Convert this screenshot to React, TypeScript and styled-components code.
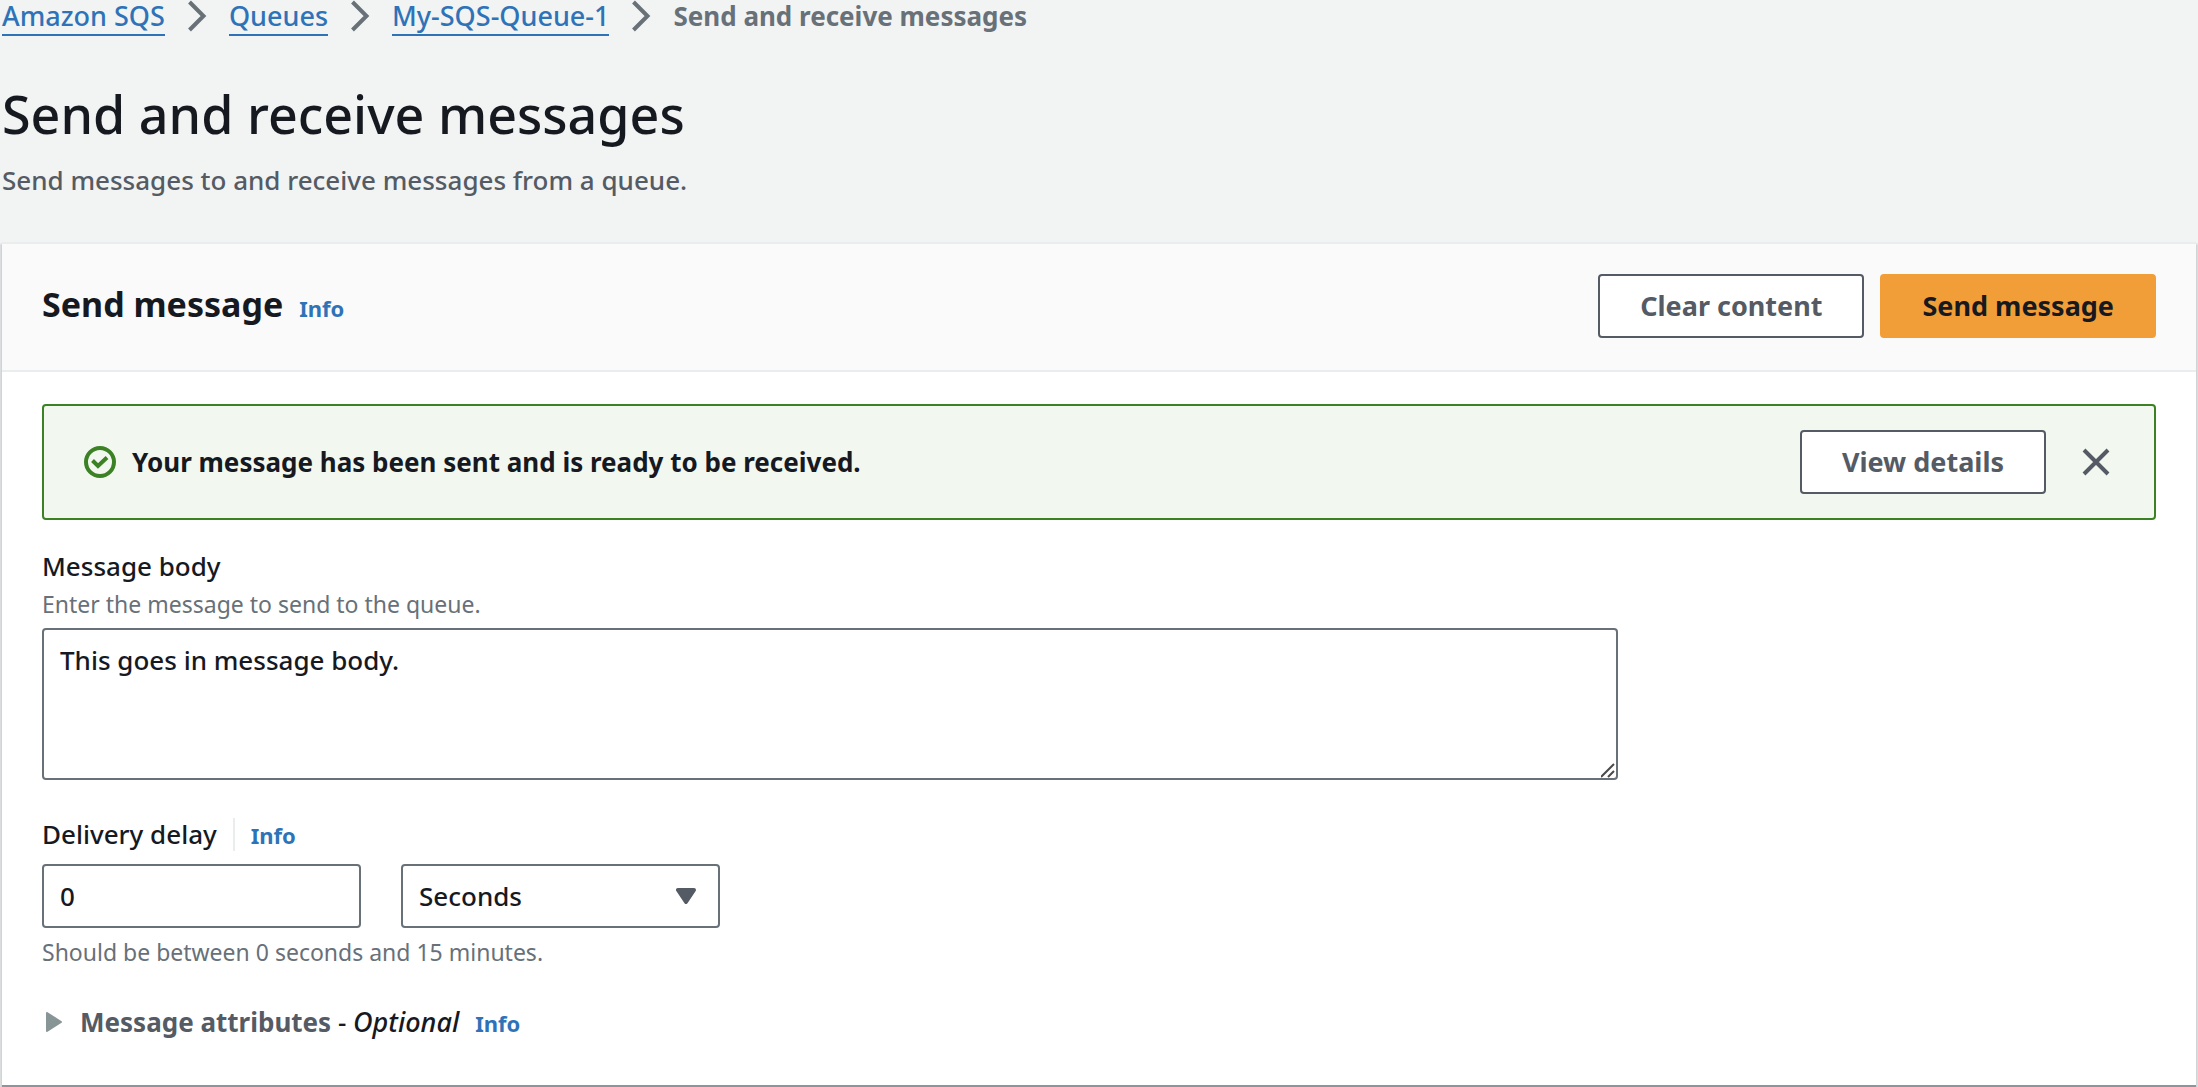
import React, { useState } from "react";
import styled, { createGlobalStyle, css } from "styled-components";

const color = {
  page: "#f2f3f3",
  text: "#16191f",
  secondary: "#545b64",
  muted: "#687078",
  link: "#2e73b8",
  line: "#eaeded",
  edge: "#8d959b",
  success: "#3c8224",
  successBg: "#f2f8f0",
  primary: "#f19e38",
};

const size = { info: "22px", small: "23px", body: "26px", action: "27px", h2: "34px", h1: "52px" };

const resizeHandle = encodeURIComponent(
  '<svg xmlns="http://www.w3.org/2000/svg" width="15" height="15"><path d="M0 14 L13 1 M7 14 L13 8" stroke="#4a4a4a" stroke-width="2" fill="none"/></svg>'
);

const GlobalStyle = createGlobalStyle`
  *, *::before, *::after { box-sizing: border-box; }
  body {
    margin: 0;
    background: ${color.page};
    color: ${color.text};
    font-family: "Noto Sans", "Open Sans", sans-serif;
    font-size: ${size.body};
    font-weight: 500;
    line-height: 32px;
  }
  button, input, select, textarea { font: inherit; color: inherit; }
`;

const Breadcrumbs = styled.ol`
  display: flex;
  align-items: center;
  gap: 22px;
  margin: 0;
  padding: 0 2px;
  list-style: none;
`;

const Crumb = styled.li`
  display: flex;
  align-items: center;
  gap: 22px;
  color: ${color.muted};
`;

const CrumbLink = styled.a`
  color: ${color.link};
  font-size: ${size.action};
  text-decoration: none;
  border-bottom: 2px solid ${color.link};
`;

const CurrentCrumb = styled.span`
  font-weight: 700;
`;

const PageHeader = styled.header`
  padding: 46px 2px 44px;
`;

const PageTitle = styled.h1`
  margin: 0 0 12px;
  font-size: ${size.h1};
  font-weight: 500;
  line-height: 72px;
`;

const PageDescription = styled.p`
  margin: 0;
  color: ${color.secondary};
  line-height: 36px;
`;

const Card = styled.section`
  margin: 0 2px;
  background: #fff;
  border-top: 2px solid ${color.line};
  border-bottom: 2px solid ${color.edge};
  box-shadow: 2px 2px 2px 0 rgba(0, 28, 36, 0.15), -2px 2px 2px 0 rgba(0, 28, 36, 0.15);
`;

const CardHeader = styled.div`
  display: flex;
  align-items: center;
  justify-content: space-between;
  padding: 30px 40px 32px;
  background: #fafafa;
  border-bottom: 2px solid ${color.line};
`;

const CardTitle = styled.div`
  display: flex;
  align-items: baseline;
  gap: 16px;
  padding-bottom: 4px;
`;

const Heading = styled.h2`
  margin: 0;
  font-size: ${size.h2};
  line-height: 44px;
`;

const InfoLink = styled.a`
  color: ${color.link};
  font-size: ${size.info};
  font-weight: 700;
  text-decoration: none;
`;

const Actions = styled.div`
  display: flex;
  align-items: center;
  gap: 16px;
`;

const Button = styled.button<{ $primary?: boolean }>`
  padding: 14px 40px;
  border: 2px solid ${color.secondary};
  border-radius: 4px;
  background: #fff;
  color: ${color.secondary};
  font-size: ${size.action};
  font-weight: 700;
  cursor: pointer;
  ${({ $primary }) =>
    $primary &&
    css`
      border-color: ${color.primary};
      background: ${color.primary};
      color: ${color.text};
    `}
`;

const CardBody = styled.div`
  padding: 32px 40px;
`;

const Alert = styled.div`
  display: flex;
  align-items: center;
  gap: 16px;
  padding: 24px 40px;
  border: 2px solid ${color.success};
  border-radius: 4px;
  background: ${color.successBg};
`;

const AlertText = styled.strong`
  flex: 1;
  font-weight: 700;
`;

const CloseButton = styled.button`
  display: flex;
  margin-left: 16px;
  padding: 0 4px;
  border: 0;
  background: none;
  color: ${color.secondary};
  cursor: pointer;
`;

const Form = styled.div`
  display: flex;
  flex-direction: column;
  gap: 34px;
  padding: 26px 0 12px;
`;

const LabelRow = styled.div`
  display: flex;
  align-items: center;
  gap: 16px;
  line-height: 40px;
`;

const InfoSlot = styled.span`
  padding-left: 16px;
  border-left: 2px solid ${color.line};
  line-height: 32px;
`;

const Hint = styled.p`
  margin: 0;
  color: ${color.muted};
  font-size: ${size.small};
  font-weight: 400;
  line-height: 36px;
`;

const Columns = styled.div`
  display: grid;
  grid-template-columns: repeat(12, 1fr);
  column-gap: 40px;
`;

const control = css`
  display: block;
  width: 100%;
  border: 2px solid ${color.muted};
  border-radius: 4px;
  background: #fff;
  outline: 0;
`;

const TextArea = styled.textarea`
  ${control}
  grid-column: span 9;
  height: 152px;
  margin-top: 6px;
  padding: 14px 16px;
  resize: both;

  &::-webkit-resizer {
    background: url("data:image/svg+xml,${resizeHandle}") no-repeat right bottom;
  }
`;

const TextInput = styled.input`
  ${control}
  grid-column: span 2;
  height: 64px;
  padding: 0 16px;
`;

const SelectBox = styled.div`
  display: grid;
  grid-column: span 2;
  align-items: center;

  & > * {
    grid-area: 1 / 1;
  }

  & > svg {
    justify-self: end;
    margin-right: 24px;
    pointer-events: none;
  }
`;

const Select = styled.select`
  ${control}
  height: 64px;
  padding: 0 16px;
  appearance: none;
`;

const Controls = styled(Columns)`
  margin: 10px 0 6px;
`;

const Expander = styled.div`
  display: flex;
  align-items: baseline;
  gap: 16px;
  line-height: 36px;
`;

const ExpandButton = styled.button`
  display: flex;
  align-items: center;
  gap: 18px;
  padding: 0 0 0 4px;
  border: 0;
  background: none;
  cursor: pointer;
`;

const ExpandLabel = styled.b`
  color: ${color.secondary};
  font-weight: 700;
`;

const OptionalMark = styled.i`
  font-size: ${size.action};
`;

const Chevron = () => (
  <svg width="20" height="32" viewBox="0 0 20 32" fill="none" aria-hidden="true">
    <path d="M2.5 2 L16.5 16 L2.5 30" stroke="currentColor" strokeWidth="4" />
  </svg>
);

const CheckCircle = () => (
  <svg width="32" height="32" viewBox="0 0 32 32" fill="none" stroke={color.success} strokeWidth="4" aria-hidden="true">
    <circle cx="16" cy="16" r="14" />
    <path d="M8.5 14.5 L14 20 L23 11.5" />
  </svg>
);

const Cross = () => (
  <svg width="28" height="28" viewBox="0 0 28 28" fill="none" aria-hidden="true">
    <path d="M2 2 L26 26 M26 2 L2 26" stroke="currentColor" strokeWidth="4" />
  </svg>
);

const CaretDown = () => (
  <svg width="20" height="16" viewBox="0 0 20 16" aria-hidden="true">
    <path d="M2 2 H18 L10 14 Z" fill={color.secondary} stroke={color.secondary} strokeWidth="4" strokeLinejoin="round" />
  </svg>
);

const CaretRight = () => (
  <svg width="16" height="20" viewBox="0 0 16 20" aria-hidden="true">
    <path d="M1 1 V19 L15 10 Z" fill="#879596" stroke="#879596" strokeWidth="2" strokeLinejoin="round" />
  </svg>
);

const trail = ["Amazon SQS", "Queues", "My-SQS-Queue-1"];

export default function App() {
  const [body, setBody] = useState("This goes in message body.");
  const [delay, setDelay] = useState("0");

  return (
    <>
      <GlobalStyle />
      <nav aria-label="Breadcrumbs">
        <Breadcrumbs>
          {trail.map((name) => (
            <Crumb key={name}>
              <span>
                <CrumbLink href="#">{name}</CrumbLink>
              </span>
              <Chevron />
            </Crumb>
          ))}
          <Crumb>
            <CurrentCrumb aria-current="page">Send and receive messages</CurrentCrumb>
          </Crumb>
        </Breadcrumbs>
      </nav>
      <main>
        <PageHeader>
          <PageTitle>Send and receive messages</PageTitle>
          <PageDescription>Send messages to and receive messages from a queue.</PageDescription>
        </PageHeader>
        <Card>
          <CardHeader>
            <CardTitle>
              <Heading>Send message</Heading>
              <InfoLink href="#">Info</InfoLink>
            </CardTitle>
            <Actions>
              <Button type="button" onClick={() => setBody("")}>Clear content</Button>
              <Button type="button" $primary>Send message</Button>
            </Actions>
          </CardHeader>
          <CardBody>
            <Alert role="status">
              <CheckCircle />
              <AlertText>Your message has been sent and is ready to be received.</AlertText>
              <Button type="button">View details</Button>
              <CloseButton type="button" aria-label="Dismiss">
                <Cross />
              </CloseButton>
            </Alert>
            <Form>
              <div>
                <LabelRow>
                  <label htmlFor="body">Message body</label>
                </LabelRow>
                <Hint>Enter the message to send to the queue.</Hint>
                <Columns>
                  <TextArea id="body" value={body} onChange={(e) => setBody(e.target.value)} />
                </Columns>
              </div>
              <div>
                <LabelRow>
                  <label htmlFor="delay">Delivery delay</label>
                  <InfoSlot>
                    <InfoLink href="#">Info</InfoLink>
                  </InfoSlot>
                </LabelRow>
                <Controls>
                  <TextInput id="delay" value={delay} onChange={(e) => setDelay(e.target.value)} />
                  <SelectBox>
                    <Select aria-label="Delay unit" defaultValue="Seconds">
                      <option>Seconds</option>
                      <option>Minutes</option>
                    </Select>
                    <CaretDown />
                  </SelectBox>
                </Controls>
                <Hint>Should be between 0 seconds and 15 minutes.</Hint>
              </div>
              <Expander>
                <ExpandButton type="button" aria-expanded="false">
                  <CaretRight />
                  <span>
                    <ExpandLabel>Message attributes</ExpandLabel> - <OptionalMark>Optional</OptionalMark>
                  </span>
                </ExpandButton>
                <InfoLink href="#">Info</InfoLink>
              </Expander>
            </Form>
          </CardBody>
        </Card>
      </main>
    </>
  );
}
